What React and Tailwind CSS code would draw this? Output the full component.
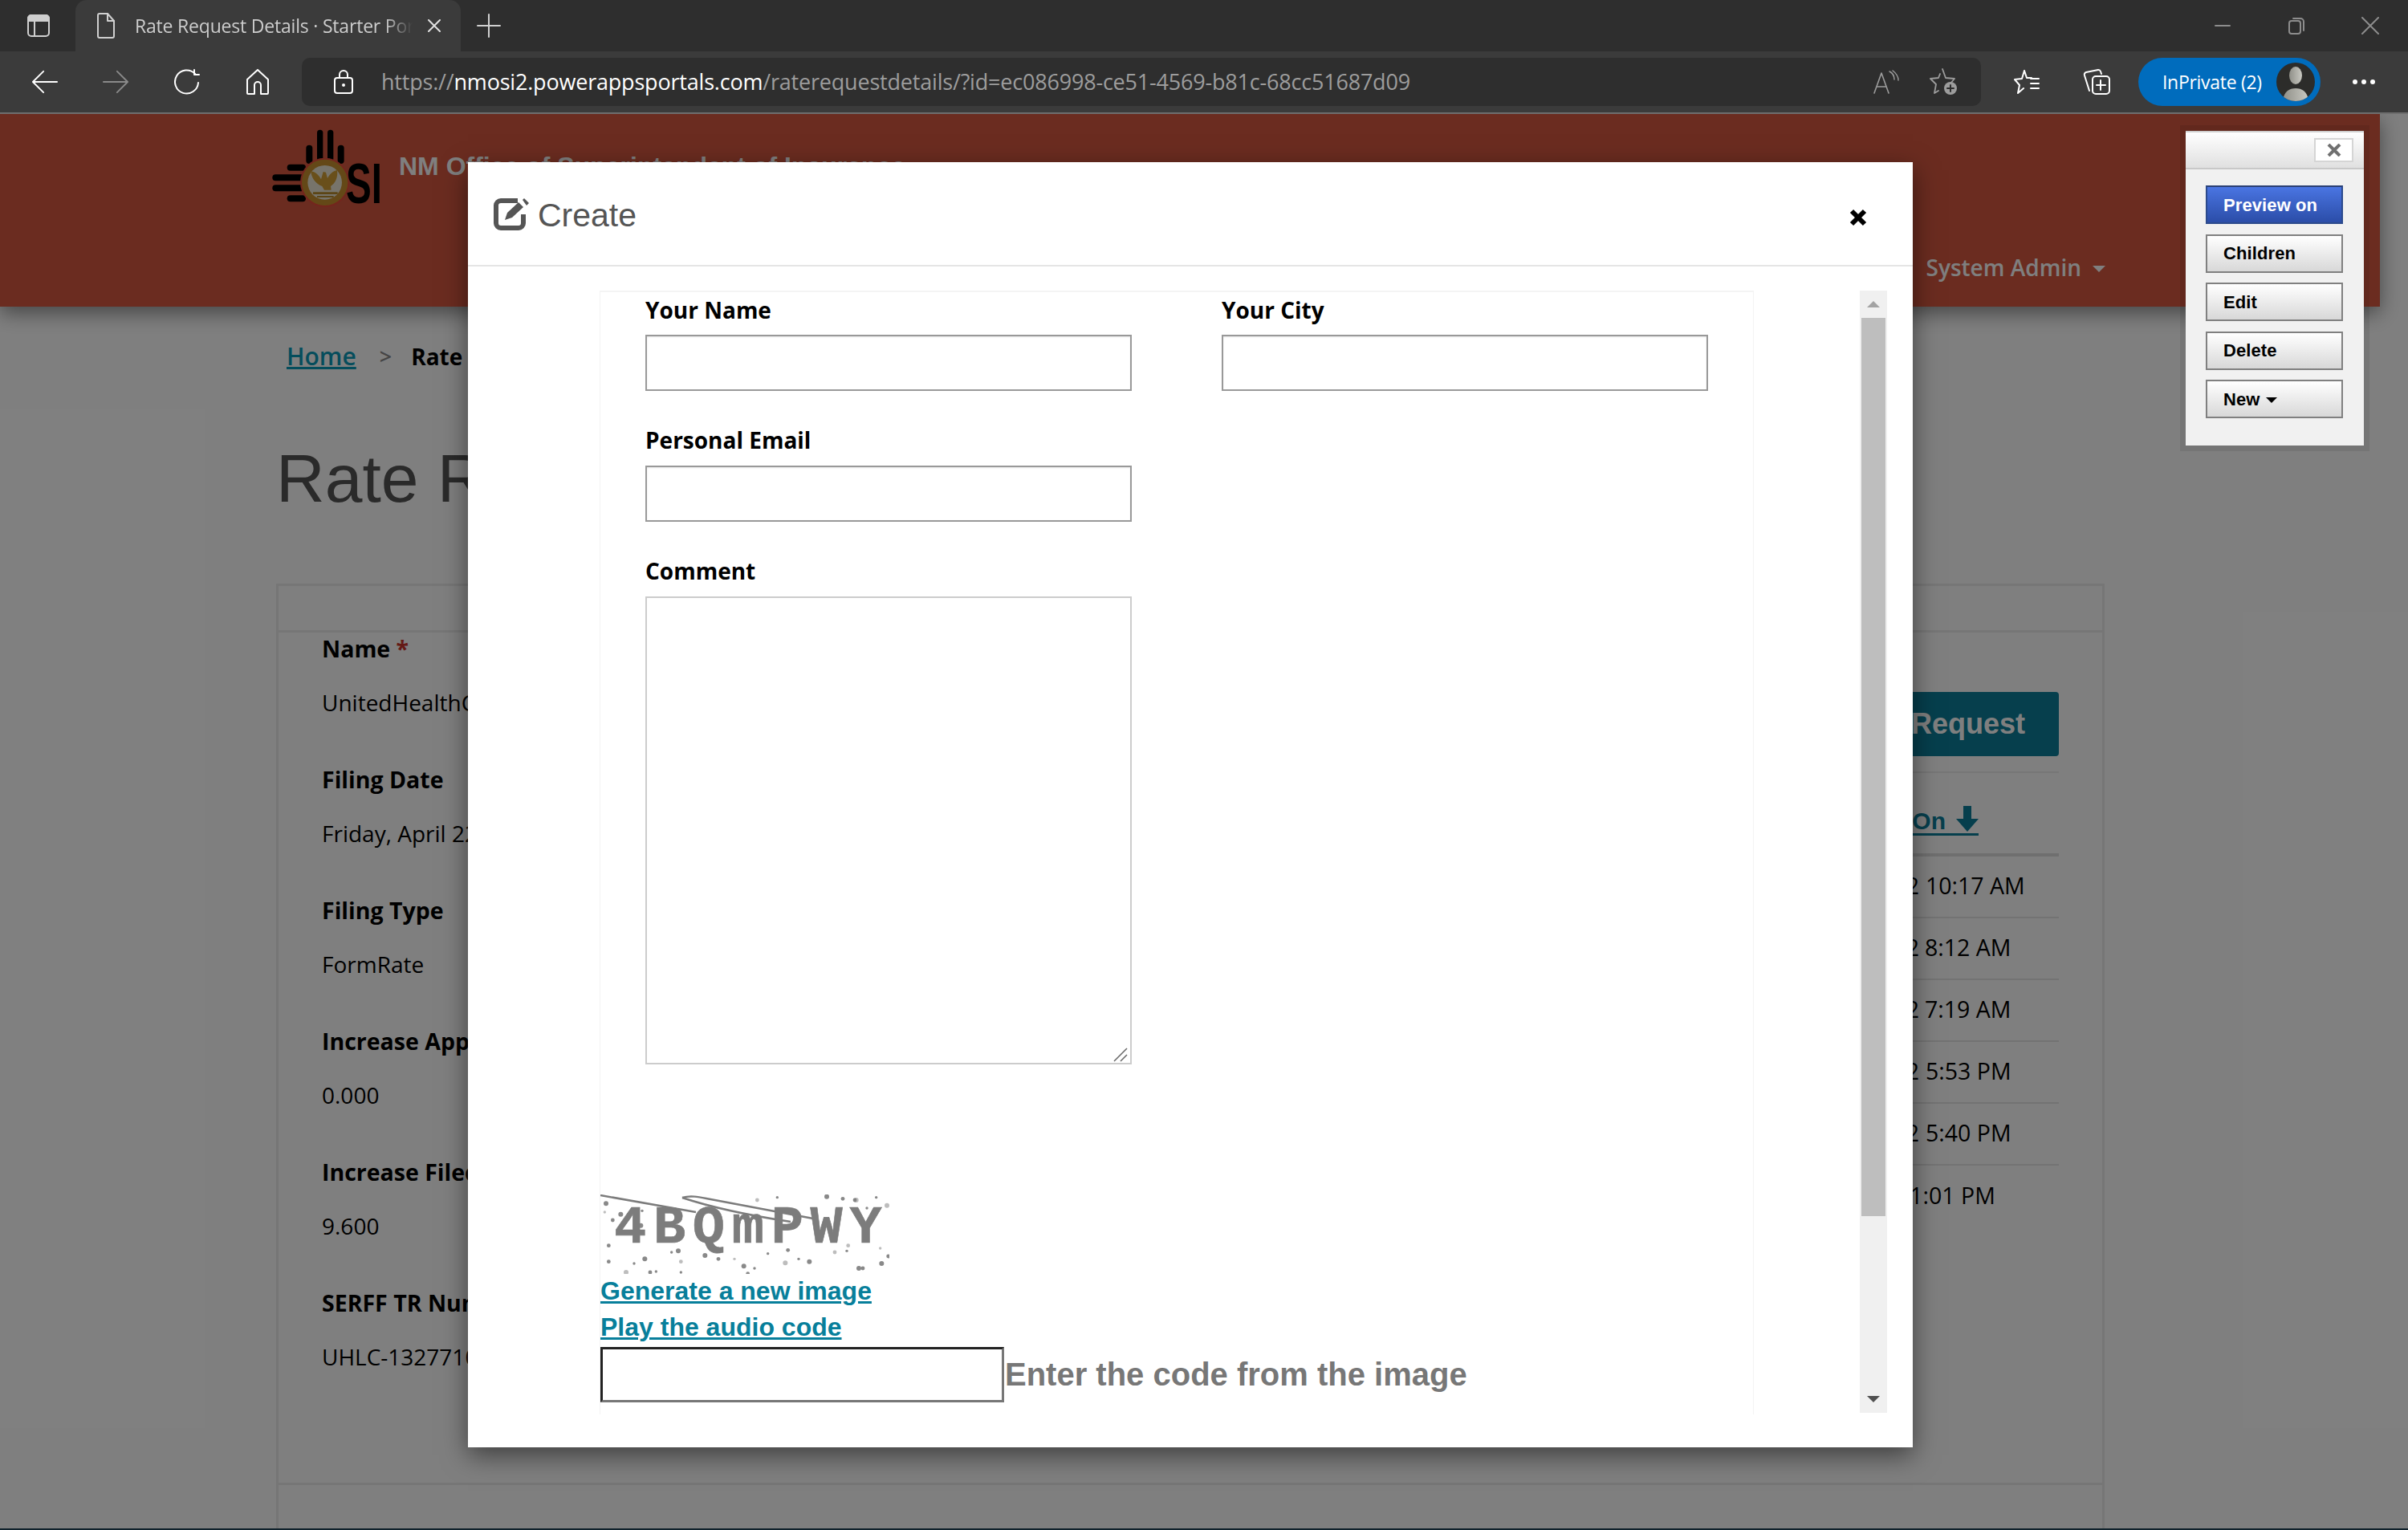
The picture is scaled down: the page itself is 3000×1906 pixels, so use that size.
import React from 'react';

const dots = [[75,88],[85,305],[180,312],[150,345],[240,345],[262,342],[345,265],[355,305],[355,345],[445,282],[495,295],[555,295],[590,322],[605,350],[630,330],[745,310],[755,262],[795,295],[835,305],[930,270],[975,265],[1020,330],[1035,330],[1100,255],[1105,312],[1130,285],[1085,65],[1125,95],[1005,75],[715,65],[900,62],[640,75],[210,115],[130,128],[100,150],[70,120],[205,170],[85,245],[680,275],[1010,75],[960,70],[320,270],[220,295],[980,245],[1050,105]];

const fields = [
  ['Name', 'UnitedHealthCare', true],
  ['Filing Date', 'Friday, April 22, 2022'],
  ['Filing Type', 'FormRate'],
  ['Increase Approved', '0.000'],
  ['Increase Filed', '9.600'],
  ['SERFF TR Number', 'UHLC-132771000'],
];

const rows = [
  ['4/22/2022', '10:17 AM', 'w-[416px]', 'ml-[8px]', true],
  ['4/21/2022', '8:12 AM', 'w-[416px]', 'ml-[7px]', true],
  ['4/21/2022', '7:19 AM', 'w-[416px]', 'ml-[7px]', true],
  ['4/20/2022', '5:53 PM', 'w-[416px]', 'ml-[8px]', true],
  ['4/20/2022', '5:40 PM', 'w-[416px]', 'ml-[8px]', true],
  ['4/9/2022', '11:01 PM', 'w-[380px]', 'ml-[8px]', false],
];

const Ic = ({ w, h, vb, cls, children }) => (
  <svg width={w} height={h} viewBox={vb || `0 0 ${w} ${h}`} fill="none" stroke="currentColor" strokeWidth="2" strokeLinecap="round" strokeLinejoin="round" className={cls}>
    {children}
  </svg>
);

function Chrome() {
  return (
    <div className="shrink-0 font-['Open_Sans',sans-serif] text-[#e6e6e6]">
      <div className="h-[64px] bg-[#2e2e2e] flex items-end relative">
        <div className="w-[94px] h-full flex items-center justify-center pl-[2px]">
          <Ic w={28} h={28} cls="text-[#cfcfcf]">
            <rect x="1" y="1" width="26" height="26" rx="4" />
            <path d="M1 8V5a4 4 0 0 1 4-4h18a4 4 0 0 1 4 4v3z" fill="currentColor" />
            <path d="M9 8v19" />
          </Ic>
        </div>
        <div className="w-[480px] h-full bg-[#3b3b3b] rounded-t-[14px] flex items-center">
          <Ic w={24} h={32} cls="ml-[26px] text-[#d0d0d0]">
            <path d="M2 3a2 2 0 0 1 2-2h10l8 9v19a2 2 0 0 1-2 2H4a2 2 0 0 1-2-2z" />
            <path d="M14 1v9h8" />
          </Ic>
          <div className="ml-[24px] w-[346px] whitespace-nowrap overflow-hidden text-[23px] tracking-[-0.2px] leading-[32px] text-[#cdcdcd] [mask-image:linear-gradient(to_right,black_90%,transparent)]">
            Rate Request Details · Starter Portal
          </div>
          <Ic w={18} h={16} cls="ml-[18px] text-[#e0e0e0]"><path d="M2 1l14 14M16 1L2 15" /></Ic>
        </div>
        <div className="h-full flex items-center ml-[20px]">
          <Ic w={30} h={30} cls="text-[#d0d0d0]"><path d="M15 1v28M1 15h28" /></Ic>
        </div>
        <div className="ml-auto h-full flex items-center text-[#8d8d8d]">
          <Ic w={20} h={4} cls="mr-[72px]"><path d="M1 2h18" /></Ic>
          <Ic w={20} h={22} cls="mr-[71px]">
            <rect x="1" y="5" width="14" height="16" rx="3" />
            <path d="M6 2h9a4 4 0 0 1 4 4v11" />
          </Ic>
          <Ic w={22} h={22} cls="mr-[36px]"><path d="M1 1l20 20M21 1L1 21" /></Ic>
        </div>
      </div>
      <div className="h-[78px] bg-[#3b3b3b] border-b-2 border-[#6e6e6e] flex items-center">
        <Ic w={32} h={30} vb="0 0 34 30" cls="ml-[40px] text-white"><path d="M33 15H2M15 1L1 15l14 14" /></Ic>
        <Ic w={32} h={30} vb="0 0 34 30" cls="ml-[56px] text-[#8a8a8a]"><path d="M1 15h31M19 1l14 14-14 14" /></Ic>
        <Ic w={32} h={32} cls="ml-[57px] text-white"><path d="M26 6A14.5 14.5 0 1 0 30 17M25 1v6h6" /></Ic>
        <Ic w={30} h={32} cls="ml-[57px] text-white"><path d="M15 1L2 13v17a1 1 0 0 0 1 1h8V20a4 4 0 0 1 8 0v11h8a1 1 0 0 0 1-1V13z" /></Ic>
        <div className="ml-[40px] w-[2092px] h-[60px] bg-[#2e2e2e] rounded-[10px] flex items-center">
          <Ic w={24} h={30} cls="ml-[40px] text-white">
            <rect x="1" y="10" width="22" height="19" rx="3" />
            <path d="M7 10V6a5 5 0 0 1 10 0v4" />
            <circle cx="12" cy="19" r="1" fill="currentColor" />
          </Ic>
          <div className="ml-[35px] text-[27px] tracking-[-0.2px] whitespace-nowrap leading-[36px] text-[#9d9d9d]">
            https://<span className="text-white">nmosi2.powerappsportals.com</span>/raterequestdetails/?id=ec086998-ce51-4569-b81c-68cc51687d09
          </div>
          <div className="ml-auto flex items-center text-[#9d9d9d]">
            <Ic w={32} h={30} cls="mr-[38px]" >
              <path d="M1 29L10 4l9 25M4 21h12" strokeWidth="1.6" />
              <path d="M20 2c4 2 6 6 6 10M24 1c4 3 7 7 7 12" strokeWidth="1.4" />
            </Ic>
            <Ic w={36} h={34} cls="mr-[28px]">
              <path d="M16 1l4 11 11 1-6 7M11 28l-5 3 2-11-7-7 10-1 2-5" strokeWidth="1.8" />
              <circle cx="26" cy="25" r="8" fill="currentColor" stroke="none" />
              <path d="M26 21v8M22 25h8" stroke="#2e2e2e" />
            </Ic>
          </div>
        </div>
        <Ic w={32} h={30} cls="ml-[41px] text-white">
          <path d="M13 1l3 9 6 0M12 23l-7 6 2-10L1 12l9-1 3-10" />
          <path d="M21 11h10M21 17h10M21 23h10" />
        </Ic>
        <Ic w={34} h={34} cls="ml-[54px] text-white">
          <rect x="12" y="10" width="21" height="22" rx="4" />
          <path d="M22 15v12M17 21h11" />
          <path d="M8 28L2 9a3 3 0 0 1 2-4l15-3a3 3 0 0 1 3 2l1 3" />
        </Ic>
        <div className="ml-[35px] w-[227px] h-[60px] bg-[#006cbd] rounded-full flex items-center pl-[30px] pr-[7px] justify-between">
          <span className="text-[23px] text-white whitespace-nowrap tracking-[-0.3px]">InPrivate (2)</span>
          <svg width="48" height="48" viewBox="0 0 48 48" className="rounded-full bg-[#2c2c2a]">
            <defs>
              <linearGradient id="av" x1="0" x2="1"><stop offset="0" stopColor="#8f8f88" /><stop offset="1" stopColor="#c9c9c2" /></linearGradient>
            </defs>
            <ellipse cx="24" cy="16" rx="8" ry="11" fill="url(#av)" />
            <path d="M8 48c1-12 8-16 16-16s15 4 16 16z" fill="url(#av)" />
          </svg>
        </div>
        <div className="ml-[40px] flex gap-[5px]">
          <span className="w-[6px] h-[6px] rounded-full bg-white" />
          <span className="w-[6px] h-[6px] rounded-full bg-white" />
          <span className="w-[6px] h-[6px] rounded-full bg-white" />
        </div>
      </div>
    </div>
  );
}

function Logo() {
  return (
    <svg width="160" height="120" viewBox="0 0 480 360" className="shrink-0">
      <g fill="#000">
        <rect x="195" y="35" width="22" height="120" rx="11" />
        <rect x="234" y="35" width="22" height="120" rx="11" />
        <rect x="154" y="92" width="24" height="70" rx="12" />
        <rect x="272" y="92" width="24" height="70" rx="12" />
        <rect x="83" y="164" width="70" height="24" rx="12" />
        <rect x="28" y="202" width="120" height="24" rx="12" />
        <rect x="28" y="241" width="120" height="24" rx="12" />
        <rect x="83" y="280" width="70" height="24" rx="12" />
      </g>
      <circle cx="224" cy="232" r="92" fill="#e84b3a" />
      <circle cx="224" cy="232" r="86" fill="#c8902e" />
      <circle cx="224" cy="232" r="64" fill="#efe9d6" />
      <path d="M172 190c16 2 30 14 38 30l8-28 10 2 6 22c8-14 20-28 36-30 4 26-6 48-24 60l2 14h-26l-8-14c-24-8-40-30-42-56z" fill="#d29f35" />
      <path d="M180 268h92v8h-92zM195 282h62v6h-62z" fill="#b98b2c" />
      <text x="0" y="0" transform="translate(303 310) scale(0.68 1)" fontFamily="'Liberation Sans',sans-serif" fontWeight="700" fontSize="210" fill="#000">SI</text>
    </svg>
  );
}

function Background() {
  return (
    <div className="font-['Open_Sans',sans-serif]">
      <div className="h-[240px] w-[2965px] bg-[#d65840] flex shadow-[0_8px_24px_rgba(0,0,0,0.45)] relative">
        <div className="pl-[330px] pt-[8px] flex items-start">
          <Logo />
          <div className="ml-[7px] mt-[37px] h-[40px] leading-[40px] text-[32px] font-bold whitespace-nowrap text-white font-['Liberation_Sans',sans-serif]">
            NM Office of Superintendent of Insurance
          </div>
        </div>
        <div className="ml-auto self-end mb-[29px] mr-[342px] flex items-center text-white text-[28px] leading-[40px] font-semibold whitespace-nowrap">
          System Admin
          <span className="ml-[14px] mt-[4px] w-0 h-0 border-x-[8px] border-x-transparent border-t-[8px] border-t-white" />
        </div>
      </div>

      <div className="ml-[357px] mt-[42px] h-[40px] flex items-center text-[30px] leading-[40px] whitespace-nowrap">
        <a className="text-[#0b9ab8] font-semibold underline">Home</a>
        <span className="ml-[29px] text-[#8a8a8a] text-[27px] font-semibold">&gt;</span>
        <span className="ml-[24px] text-[28px] font-bold text-black">Rate Request Details</span>
      </div>

      <h1 className="ml-[344px] mt-[82px] h-[100px] text-[84px] leading-[100px] text-[#555] font-['Liberation_Sans',sans-serif] whitespace-nowrap">
        Rate Request Details
      </h1>

      <div className="ml-[344px] mt-[81px] w-[2278px] h-[1180px] border-x-[3px] border-[#ececec]">
        <div className="h-[61px] border-y-[3px] border-[#ececec]" />
        <div className="h-[1062px] border-b-[3px] border-[#ececec] flex">
          <div className="pl-[54px] w-[1000px]">
            {fields.map(([l, v, req]) => (
              <div key={l} className="h-[163px] whitespace-nowrap">
                <div className="h-[40px] leading-[40px] text-[28.5px] font-bold text-black">
                  {l}{req && <span className="text-[#c8322a]"> *</span>}
                </div>
                <div className="mt-[27px] h-[40px] leading-[40px] text-[28px] text-black">{v}</div>
              </div>
            ))}
          </div>
          <div className="ml-auto mr-[54px] w-[590px] pt-[74px]">
            <div className="h-[80px] rounded-[4px] bg-[#0c7e9a] flex items-center justify-end pr-[42px] text-[36px] font-bold text-white font-['Liberation_Sans',sans-serif]">
              Add Rate Request
            </div>
            <div className="mt-[19px] h-[2px] bg-[#ececec]" />
            <div className="h-[104px] border-b-4 border-[#dedede] flex items-start justify-end pr-[100px] pt-[39px] text-[30px] leading-[30px] font-bold text-[#0c7e9a] font-['Liberation_Sans',sans-serif] whitespace-nowrap">
              <div className="h-[39px] flex items-end gap-[13px] border-b-[3px] border-[#0c7e9a]">
                <span>Created On</span>
                <svg width="28" height="32" viewBox="0 0 28 32" className="mb-[2px]">
                  <path d="M9 0h10v16h9L14 32 0 16h9z" fill="#0c7e9a" />
                </svg>
              </div>
            </div>
            {rows.map(([d, t, wc, mc, line], i) => (
              <div key={i} className={`h-[77px] flex items-center pb-[3px] text-[28.5px] text-black whitespace-nowrap ${line ? 'border-b-2 border-[#e6e6e6]' : ''}`}>
                <span className={`${wc} text-right`}>{d}</span>
                <span className={mc}>{t}</span>
              </div>
            ))}
          </div>
        </div>
      </div>
    </div>
  );
}

function Label({ children, cls }) {
  return <div className={`h-[40px] leading-[40px] text-[28px] font-bold text-black whitespace-nowrap font-['Open_Sans',sans-serif] ${cls || ''}`}>{children}</div>;
}

function Input() {
  return <input type="text" className="block w-[606px] h-[70px] border-2 border-[#999] bg-white shadow-[inset_0_1px_2px_rgba(0,0,0,0.1)] outline-none" />;
}

function Captcha() {
  return (
    <svg width="360" height="99" viewBox="0 0 360 99" className="block [filter:blur(0.6px)]">
      <g fill="#7c7c7c">
        {dots.map(([x, y], i) => (
          <circle key={i} cx={x / 3 - 18} cy={y / 3 - 18} r={i % 3 === 0 ? 3 : i % 3 === 1 ? 2.4 : 1.7} opacity={i % 4 === 3 ? 0.5 : 0.9} />
        ))}
      </g>
      <text x="17" y="60" fontFamily="'Liberation Mono',monospace" fontWeight="700" fontSize="67" letterSpacing="8.7" stroke="#7c7c7c" strokeWidth="0.6" fill="#7c7c7c">4BQmPWY</text>
      <g stroke="#7c7c7c" fill="none">
        <path d="M0 1L119 22" strokeWidth="2.5" />
        <path d="M102 4c10-3 20-1 30 1L265 30" strokeWidth="2.5" />
        <path d="M102 4c30 10 70 20 135 30" strokeWidth="2.5" />
      </g>
    </svg>
  );
}

function Modal() {
  return (
    <div className="absolute left-[583px] top-[60px] w-[1800px] h-[1601px] bg-white shadow-[0_10px_30px_rgba(0,0,0,0.5)] flex flex-col font-['Liberation_Sans',sans-serif]">
      <div className="h-[130px] border-b-2 border-[#e5e5e5] shrink-0 flex items-center pl-[32px] pr-[57px]">
        <svg width="44" height="40" viewBox="0 0 44 40" className="shrink-0 mb-[-2px]">
          <path d="M30 3H9a6 6 0 0 0-6 6v22a6 6 0 0 0 6 6h22a6 6 0 0 0 6-6V20" fill="none" stroke="#555" strokeWidth="6" />
          <path d="M14 27l3-9L31 5l6 6-14 13z" fill="#555" />
          <path d="M36 2l2-2 6 6-3 3z" fill="#555" />
        </svg>
        <span className="ml-[11px] mt-[4px] text-[41px] leading-[50px] text-[#555]">Create</span>
        <svg width="22" height="22" viewBox="0 0 22 22" className="ml-auto mt-[9px]">
          <path d="M3 3l16 16M19 3L3 19" stroke="#000" strokeWidth="6" fill="none" />
        </svg>
      </div>
      <div className="flex pl-[164px] pr-[32px] pt-[30px]">
        <div className="w-[1438px] h-[1400px] border-t-2 border-x border-[#f4f4f4] overflow-hidden">
          <div className="pl-[56px] pt-[2px]">
            <div className="flex">
              <div className="w-[718px]">
                <Label>Your Name</Label>
                <div className="mt-[11px]"><Input /></div>
              </div>
              <div>
                <Label>Your City</Label>
                <div className="mt-[11px]"><Input /></div>
              </div>
            </div>
            <Label cls="mt-[41px]">Personal Email</Label>
            <div className="mt-[12px]"><Input /></div>
            <Label cls="mt-[41px]">Comment</Label>
            <div className="relative mt-[12px] w-[606px] h-[583px]">
              <textarea className="block w-full h-full border-2 border-[#ccc] outline-none resize-none" />
              <svg width="22" height="22" viewBox="0 0 22 22" className="absolute right-[2px] bottom-[2px]">
                <path d="M2 20L18 4M10 20l8-8" stroke="#6a6a6a" strokeWidth="1.6" fill="none" />
              </svg>
            </div>
          </div>
          <div className="mt-[162px]">
            <Captcha />
            <div className="-mt-[1px] text-[32px] leading-[45px] font-bold text-[#087f9b]">
              <div><a className="underline decoration-[3px]">Generate a new image</a></div>
              <div><a className="underline decoration-[3px]">Play the audio code</a></div>
            </div>
            <div className="mt-[2px] flex items-center">
              <input type="text" className="block w-[503px] h-[69px] border-[3px] border-t-[#222] border-l-[#222] border-r-[#777] border-b-[#777] outline-none bg-white" />
              <span className="ml-[1px] mb-[1px] text-[40px] font-bold text-[#777] whitespace-nowrap">Enter the code from the image</span>
            </div>
          </div>
        </div>
        <div className="ml-auto w-[34px] h-[1398px] bg-[#f0f0f0] flex flex-col items-center">
          <div className="h-[34px] w-full flex items-center justify-center">
            <span className="w-0 h-0 border-x-[8px] border-x-transparent border-b-[8px] border-b-[#a3a3a3]" />
          </div>
          <div className="w-[30px] h-[1119px] bg-[#bebebe]" />
          <div className="mt-auto h-[34px] w-full flex items-center justify-center">
            <span className="w-0 h-0 border-x-[8px] border-x-transparent border-t-[8px] border-t-[#505050]" />
          </div>
        </div>
      </div>
    </div>
  );
}

function ToolBtn({ children, primary }) {
  return (
    <button className={`block w-[171px] h-[48px] text-left pl-[20px] text-[22px] tracking-[0.1px] font-bold whitespace-nowrap border-2 ${primary ? 'text-white border-[#2c4a8c] border-t-[#2a3f73] bg-gradient-to-b from-[#4a75e2] to-[#2b4da8]' : 'text-black border-[#808080] bg-gradient-to-b from-white to-[#d8d8d8]'}`}>
      {children}
    </button>
  );
}

function DevPanel() {
  return (
    <div className="absolute left-[2723px] top-[21px] w-[222px] h-[392px] bg-[#f1f1f1] border-t-2 border-[#cfcfcf] shadow-[0_0_0_7px_rgba(0,0,0,0.08)] font-['Liberation_Sans',sans-serif]">
      <div className="h-[46px] bg-gradient-to-b from-white to-[#e0e0e0] border-b-2 border-[#c8c8c8] flex items-center justify-end pr-[13px]">
        <div className="w-[49px] h-[30px] bg-white border-2 border-[#d5d5d5] flex items-center justify-center">
          <svg width="18" height="16" viewBox="0 0 18 16"><path d="M2 1l14 14M16 1L2 15" stroke="#707070" strokeWidth="4" fill="none" /></svg>
        </div>
      </div>
      <div className="pl-[25px] pt-[20px] flex flex-col gap-[12.5px]">
        <ToolBtn primary>Preview on</ToolBtn>
        <ToolBtn>Children</ToolBtn>
        <ToolBtn>Edit</ToolBtn>
        <ToolBtn>Delete</ToolBtn>
        <ToolBtn>
          <span className="inline-flex items-center">New<span className="ml-[7px] mt-[3px] w-0 h-0 border-x-[7px] border-x-transparent border-t-[7px] border-t-black" /></span>
        </ToolBtn>
      </div>
    </div>
  );
}

export default function App() {
  return (
    <div className="w-[3000px] h-[1906px] overflow-hidden bg-white flex flex-col">
      <Chrome />
      <div className="relative h-[1762px] shrink-0 overflow-hidden bg-white">
        <Background />
        <div className="absolute inset-0 bg-black/50" />
        <Modal />
        <DevPanel />
      </div>
      <div className="h-[2px] bg-[#10222c] shrink-0" />
    </div>
  );
}
